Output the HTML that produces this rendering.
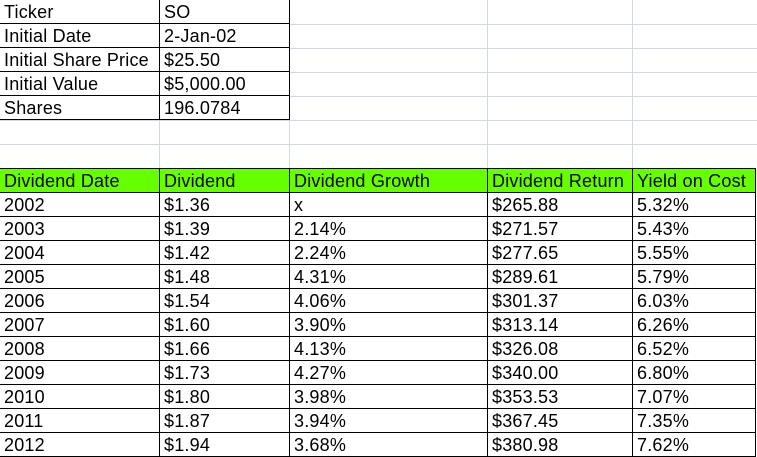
<!DOCTYPE html>
<html><head><meta charset="utf-8"><style>
body{margin:0;width:757px;height:457px;background:#fff;position:relative;overflow:hidden;font-family:"Liberation Sans",Arial,sans-serif;font-size:18px;color:#000}
.g{position:absolute;background:#d0d7e5}
table{position:absolute;border-collapse:collapse;table-layout:fixed}
td{border:1px solid #000;height:22px;padding:1px 0 0 4px;line-height:22px;white-space:nowrap;overflow:hidden;vertical-align:middle;letter-spacing:0.2px}
.h td{background:#66ff00}
</style></head><body>
<div class="g" style="left:0;top:144px;width:757px;height:1px"></div>
<div class="g" style="left:289px;top:24px;width:468px;height:1px"></div>
<div class="g" style="left:289px;top:48px;width:468px;height:1px"></div>
<div class="g" style="left:289px;top:72px;width:468px;height:1px"></div>
<div class="g" style="left:289px;top:96px;width:468px;height:1px"></div>
<div class="g" style="left:0;top:120px;width:757px;height:1px"></div>
<div class="g" style="left:159px;top:120px;width:1px;height:48px"></div>
<div class="g" style="left:289px;top:0;width:1px;height:168px"></div>
<div class="g" style="left:487px;top:0;width:1px;height:168px"></div>
<div class="g" style="left:632px;top:0;width:1px;height:168px"></div>

<table style="left:-1px;top:0">
<colgroup><col style="width:160px"><col style="width:130px"></colgroup>
<tr><td style="border-top:none">Ticker</td><td style="border-top:none">SO</td></tr>
<tr><td>Initial Date</td><td>2-Jan-02</td></tr>
<tr><td>Initial Share Price</td><td>$25.50</td></tr>
<tr><td>Initial Value</td><td>$5,000.00</td></tr>
<tr><td>Shares</td><td>196.0784</td></tr>
</table>

<table style="left:-1px;top:168px">
<colgroup><col style="width:160px"><col style="width:130px"><col style="width:198px"><col style="width:145px"><col style="width:123px"></colgroup>
<tr class="h"><td>Dividend Date</td><td>Dividend</td><td>Dividend Growth</td><td>Dividend Return</td><td>Yield on Cost</td></tr>
<tr><td>2002</td><td>$1.36</td><td>x</td><td>$265.88</td><td>5.32%</td></tr>
<tr><td>2003</td><td>$1.39</td><td>2.14%</td><td>$271.57</td><td>5.43%</td></tr>
<tr><td>2004</td><td>$1.42</td><td>2.24%</td><td>$277.65</td><td>5.55%</td></tr>
<tr><td>2005</td><td>$1.48</td><td>4.31%</td><td>$289.61</td><td>5.79%</td></tr>
<tr><td>2006</td><td>$1.54</td><td>4.06%</td><td>$301.37</td><td>6.03%</td></tr>
<tr><td>2007</td><td>$1.60</td><td>3.90%</td><td>$313.14</td><td>6.26%</td></tr>
<tr><td>2008</td><td>$1.66</td><td>4.13%</td><td>$326.08</td><td>6.52%</td></tr>
<tr><td>2009</td><td>$1.73</td><td>4.27%</td><td>$340.00</td><td>6.80%</td></tr>
<tr><td>2010</td><td>$1.80</td><td>3.98%</td><td>$353.53</td><td>7.07%</td></tr>
<tr><td>2011</td><td>$1.87</td><td>3.94%</td><td>$367.45</td><td>7.35%</td></tr>
<tr><td>2012</td><td>$1.94</td><td>3.68%</td><td>$380.98</td><td>7.62%</td></tr>
</table>
</body></html>
